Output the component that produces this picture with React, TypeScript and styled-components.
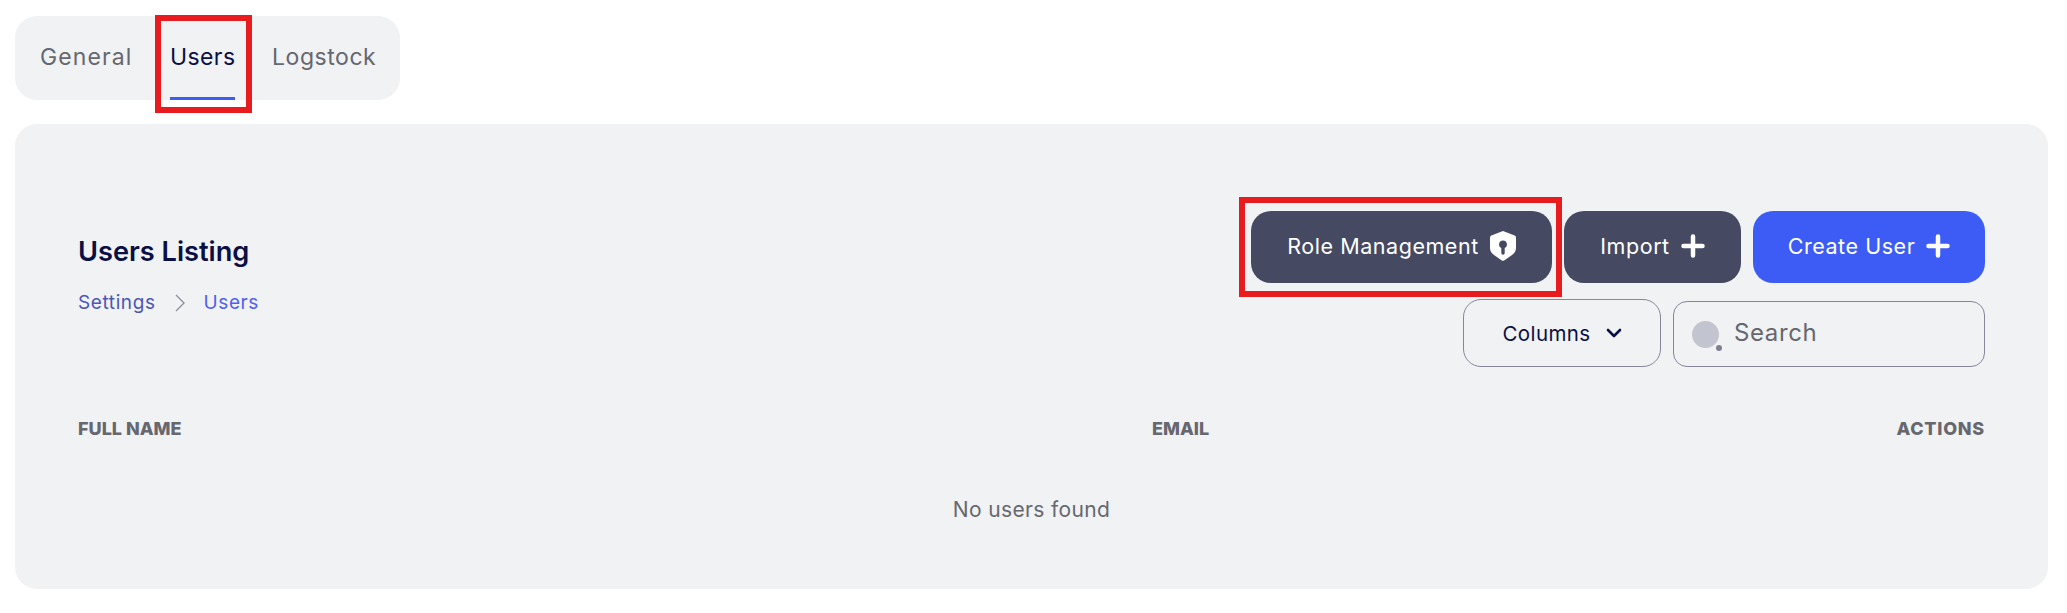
import React from "react";
import styled, { createGlobalStyle } from "styled-components";

const Global = createGlobalStyle`
  html, body { margin: 0; padding: 0; background: #fff; }
  body { font-family: Inter, "Noto Sans", sans-serif; }
`;

const Page = styled.div`
  width: 2067px;
  height: 613px;
  box-sizing: border-box;
  padding: 16px 19px 0 15px;
  overflow: hidden;
`;

const Tabs = styled.nav`
  display: flex;
  width: fit-content;
  align-items: flex-start;
  height: 84px;
  box-sizing: border-box;
  padding: 0 24px 0 25px;
  gap: 37px;
  background: #f1f2f4;
  border-radius: 22px;
`;

const Tab = styled.div<{ $active?: boolean; $w: number; $track: number }>`
  position: relative;
  width: ${(p) => p.$w}px;
  height: 84px;
  box-sizing: border-box;
  padding-top: 25px;
  font-size: 23px;
  line-height: 32px;
  letter-spacing: ${(p) => p.$track}px;
  white-space: nowrap;
  color: ${(p) => (p.$active ? "#0b1044" : "#66676f")};
  border-bottom: 3px solid ${(p) => (p.$active ? "#3c5cf3" : "transparent")};
`;

const MarkedTab = styled(Tab)`
  &::after {
    content: "";
    position: absolute;
    top: -1px;
    right: -17px;
    bottom: -16px;
    left: -15px;
    border: 6px solid #e81c1f;
  }
`;

const Panel = styled.section`
  margin-top: 24px;
  height: 465px;
  box-sizing: border-box;
  padding: 87px 63px 0 63px;
  background: #f1f2f4;
  border-radius: 22px;
`;

const Head = styled.header`
  display: flex;
  justify-content: space-between;
  align-items: flex-start;
`;

const TitleBlock = styled.div`
  padding-top: 21px;
`;

const Title = styled.h1`
  margin: 0;
  font-size: 27.2px;
  line-height: 40px;
  font-weight: 600;
  color: #0b1044;
`;

const Crumbs = styled.div`
  margin-top: 16px;
  display: flex;
  align-items: center;
  font-size: 19px;
  line-height: 30px;
  letter-spacing: 0.6px;
`;

const Crumb = styled.span<{ $current?: boolean }>`
  color: ${(p) => (p.$current ? "#4f5ff0" : "#4c56b3")};
`;

const Sep = styled.svg`
  width: 12px;
  height: 20px;
  margin: 0 18px 0 18px;
  fill: none;
  stroke: #8f91a0;
  stroke-width: 1.4;
`;

const Actions = styled.div`
  display: flex;
  flex-direction: column;
  align-items: flex-end;
`;

const ButtonRow = styled.div`
  display: flex;
  gap: 12px;
`;

const Button = styled.button<{ $primary?: boolean; $w: number }>`
  position: relative;
  width: ${(p) => p.$w}px;
  height: 72px;
  padding: 0 0 2px;
  display: flex;
  align-items: center;
  justify-content: center;
  gap: 11px;
  border: 0;
  border-radius: 20px;
  font-family: inherit;
  font-size: 21.5px;
  font-weight: 400;
  letter-spacing: 0.55px;
  color: #fff;
  background: ${(p) => (p.$primary ? "#3c5cf5" : "#454962")};
`;

const RoleButton = styled(Button)`
  &::after {
    content: "";
    position: absolute;
    top: -14px;
    right: -10px;
    bottom: -14px;
    left: -12px;
    border: 6px solid #e81c1f;
  }
`;

const Icon = styled.svg`
  width: 26px;
  height: 30px;
  flex: none;
`;

const PlusIcon = styled.svg`
  width: 24px;
  height: 24px;
  flex: none;
  fill: none;
  stroke: #fff;
  stroke-width: 4.5;
  stroke-linecap: round;
`;

const FilterRow = styled.div`
  display: flex;
  align-items: flex-end;
  gap: 12px;
  margin-top: 16px;
`;

const Columns = styled.button`
  width: 198px;
  height: 68px;
  display: flex;
  align-items: center;
  justify-content: center;
  gap: 14px;
  padding: 0 0 0 1px;
  background: transparent;
  border: 1px solid #85869a;
  border-radius: 18px;
  font-family: inherit;
  font-size: 20.5px;
  font-weight: 400;
  letter-spacing: 0.4px;
  color: #0b1044;
`;

const Chevron = styled.svg`
  width: 18px;
  height: 18px;
  fill: none;
  stroke: #0b1044;
  stroke-width: 2.6;
  stroke-linecap: round;
  stroke-linejoin: round;
`;

const Search = styled.div`
  width: 312px;
  height: 66px;
  box-sizing: border-box;
  display: flex;
  align-items: center;
  padding-left: 18px;
  border: 1px solid #85869a;
  border-radius: 14px;
`;

const SearchDot = styled.span`
  position: relative;
  width: 27px;
  height: 27px;
  margin-right: 15px;
  border-radius: 50%;
  background: #c2c4cf;
  &::after {
    content: "";
    position: absolute;
    right: -3px;
    bottom: -3px;
    width: 6px;
    height: 6px;
    border-radius: 50%;
    background: #7d7f92;
  }
`;

const SearchText = styled.span`
  font-size: 24px;
  line-height: 30px;
  margin-top: -2px;
  letter-spacing: 0.6px;
  color: #66676f;
`;

const TableHead = styled.div`
  display: grid;
  grid-template-columns: 1074px 1fr auto;
  margin-top: 49px;
  font-size: 18px;
  line-height: 26px;
  font-weight: 800;
  color: #66676f;
`;

const ActionsHead = styled.span`
  letter-spacing: 0.75px;
`;

const Empty = styled.div`
  margin-top: 53px;
  text-align: center;
  font-size: 21px;
  line-height: 30px;
  letter-spacing: 0.35px;
  color: #66676f;
`;

const Plus = () => (
  <PlusIcon viewBox="0 0 24 24">
    <path d="M12 2.500v19M2.500 12h19" />
  </PlusIcon>
);

export default function App() {
  return (
    <Page>
      <Global />
      <Tabs>
        <Tab $w={93} $track={1.1}>General</Tab>
        <MarkedTab $active $w={65} $track={0.4}>Users</MarkedTab>
        <Tab $w={104} $track={0.55}>Logstock</Tab>
      </Tabs>
      <Panel>
        <Head>
          <TitleBlock>
            <Title>Users Listing</Title>
            <Crumbs>
              <Crumb>Settings</Crumb>
              <Sep viewBox="0 0 12 20">
                <path d="M2 2l8 8-8 8" />
              </Sep>
              <Crumb $current>Users</Crumb>
            </Crumbs>
          </TitleBlock>
          <Actions>
            <ButtonRow>
              <RoleButton $w={301}>
                Role Management
                <Icon viewBox="0 0 26 30">
                  <path
                    fill="#fff"
                    fillRule="evenodd"
                    d="M13 0l11 4.200c1 .4 2 1 2 2.300V17c0 3-1.500 5-4 7l-7.500 5.200c-1 .8-2 .8-3 0L4 24c-2.500-2-4-4-4-7V6.500C0 5.200 1 4.600 2 4.200L13 0zm0 9.500a4 4 0 0 0-1.700 7.600V22a1.700 1.700 0 0 0 3.400 0v-4.900A4 4 0 0 0 13 9.500z"
                  />
                </Icon>
              </RoleButton>
              <Button $w={177}>
                Import
                <Plus />
              </Button>
              <Button $primary $w={232}>
                Create User
                <Plus />
              </Button>
            </ButtonRow>
            <FilterRow>
              <Columns>
                Columns
                <Chevron viewBox="0 0 18 18">
                  <path d="M3 6l6 6 6-6" />
                </Chevron>
              </Columns>
              <Search>
                <SearchDot />
                <SearchText>Search</SearchText>
              </Search>
            </FilterRow>
          </Actions>
        </Head>
        <TableHead>
          <span>FULL NAME</span>
          <span>EMAIL</span>
          <ActionsHead>ACTIONS</ActionsHead>
        </TableHead>
        <Empty>No users found</Empty>
      </Panel>
    </Page>
  );
}
